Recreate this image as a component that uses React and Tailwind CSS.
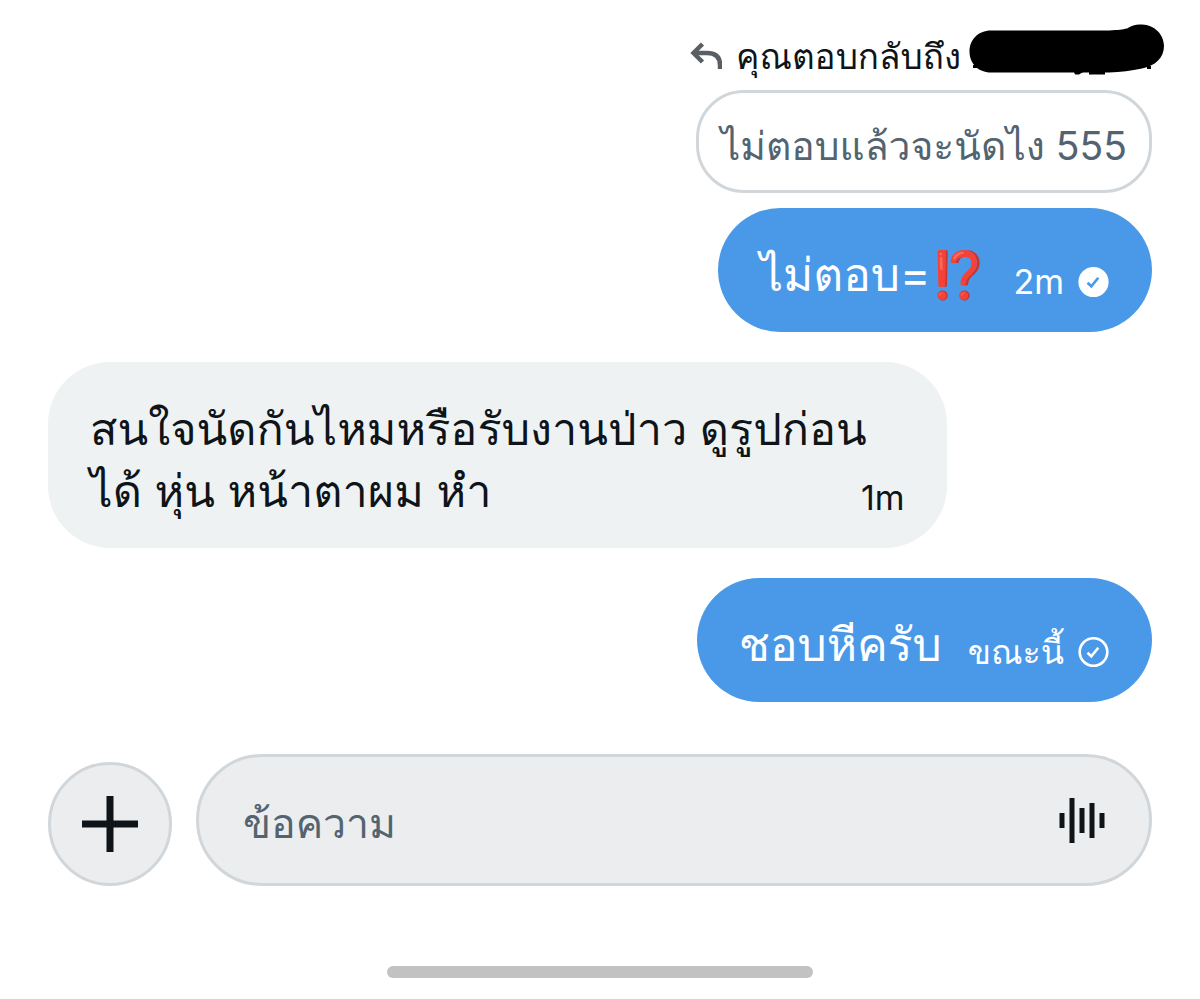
import React, { useState } from "react";

const ReplyIcon = () => (
  <svg viewBox="0 0 32 28" className="h-7 w-8 shrink-0" fill="none" stroke="#5a5f66" strokeWidth="4.500" aria-hidden="true">
    <path d="M12.500 2 3.500 11l9 9" />
    <path d="M3.500 11H17q13 0 13 12v4" />
  </svg>
);

const SentIcon = ({ read }) => (
  <svg viewBox="0 0 32 32" className="size-8 shrink-0" fill="none" aria-hidden="true">
    <circle cx="15.500" cy="16" r="13.800" fill={read ? "#fff" : "none"} stroke="#fff" strokeWidth="2.600" />
    <path d="m9.500 16.800 3.800 3.500 7-8.600" stroke={read ? "#4a99e9" : "#fff"} strokeWidth="2.600" />
  </svg>
);

const PlusIcon = () => (
  <svg viewBox="0 0 56 56" className="size-14" stroke="#0f1419" strokeWidth="7" aria-hidden="true">
    <path d="M28 0v56M0 28h56" />
  </svg>
);

const VoiceIcon = () => (
  <svg viewBox="0 0 46 46" className="size-[46px]" stroke="#0f1419" strokeWidth="5" aria-hidden="true">
    <path d="M3 16v15M13 1v45M23 11v25M33 6v35M43 16v15" />
  </svg>
);

// marker stroke over the name, with the bits of text that stick out under it
const Redaction = () => (
  <svg viewBox="0 0 196 52" className="h-[52px] w-[196px]" aria-hidden="true">
    <path d="M22 6.500H140C150 6 153 5.500 158 4.500C163 1 168 0 173 0.500C186 1 195 11 195 22C195 34 186 42 173 44.500C162 47 152 48 140 48.500H22C9 48.500 0.500 39 0.500 27.500C0.500 16 9 6.500 22 6.500Z" />
    <path d="M105 48h9l-4 2.500h-4zM120 48h16v2.500h-16zM178 42h4v3h-4zM4 41h4v3h-4z" />
  </svg>
);

function SentMessage({ children, time, read }) {
  return (
    <div className="flex h-[124px] items-center self-end rounded-[62px] bg-[#4a99e9] px-[42px] text-white">
      <p className="pt-2 text-[46px] leading-[62px]">{children}</p>
      <div className="mt-6 ml-[26px] flex items-center gap-3.5">
        <time className="text-[34px] leading-10">{time}</time>
        <SentIcon read={read} />
      </div>
    </div>
  );
}

export default function App() {
  const [message, setMessage] = useState("");

  return (
    <div className="flex min-h-screen flex-col bg-white font-['Inter','Loma','FreeSans',sans-serif] text-[#0f1419]">
      <main className="flex flex-col px-12 pt-8">
        <div className="flex h-12 items-center self-end">
          <ReplyIcon />
          <p className="ml-3.5 text-[35px] leading-[48px]">คุณตอบกลับถึง</p>
          <div className="relative ml-2 h-12 w-[183px]">
            <div className="absolute -top-2 left-0">
              <Redaction />
            </div>
          </div>
        </div>

        <div className="mt-2.5 flex h-[103px] items-center self-end rounded-[48px] border-3 border-[#d0d6da] px-[22px]">
          <p className="pt-2 text-[39px] leading-[60px] text-[#536471]">ไม่ตอบแล้วจะนัดไง 555</p>
        </div>

        <div className="mt-[15px] flex flex-col">
          <SentMessage time="2m" read>
            ไม่ตอบ=⁉️
          </SentMessage>
        </div>

        <div className="mt-[30px] flex h-[186px] items-end self-start rounded-[62px] bg-[#eef2f3] px-[42px] pb-[26px]">
          <p className="text-[45px] leading-[62px]">
            สนใจนัดกันไหมหรือรับงานป่าว ดูรูปก่อน
            <br />
            ได้ หุ่น หน้าตาผม หำ
          </p>
          <time className="mb-1 -ml-1.5 text-[34px] leading-10">1m</time>
        </div>

        <div className="mt-[30px] flex flex-col">
          <SentMessage time="ขณะนี้">ชอบหีครับ</SentMessage>
        </div>
      </main>

      <form className="mt-[52px] flex items-end gap-6 px-12" onSubmit={(e) => e.preventDefault()}>
        <button
          type="button"
          aria-label="เพิ่ม"
          className="flex size-[124px] shrink-0 items-center justify-center rounded-full border-3 border-[#d0d6da] bg-[#ebedef]"
        >
          <PlusIcon />
        </button>
        <div className="flex h-[132px] min-w-0 flex-1 items-center rounded-full border-3 border-[#d0d6da] bg-[#ebedef] px-11">
          <input
            type="text"
            aria-label="ข้อความ"
            placeholder="ข้อความ"
            value={message}
            onChange={(e) => setMessage(e.target.value)}
            className="h-20 min-w-0 flex-1 bg-transparent pt-1.5 text-[41px] outline-none placeholder:text-[#536471]"
          />
          <button type="button" aria-label="บันทึกเสียง">
            <VoiceIcon />
          </button>
        </div>
      </form>

      <div className="mt-20 h-3 w-[426px] self-center rounded-full bg-[#c2c2c2]" />
    </div>
  );
}
